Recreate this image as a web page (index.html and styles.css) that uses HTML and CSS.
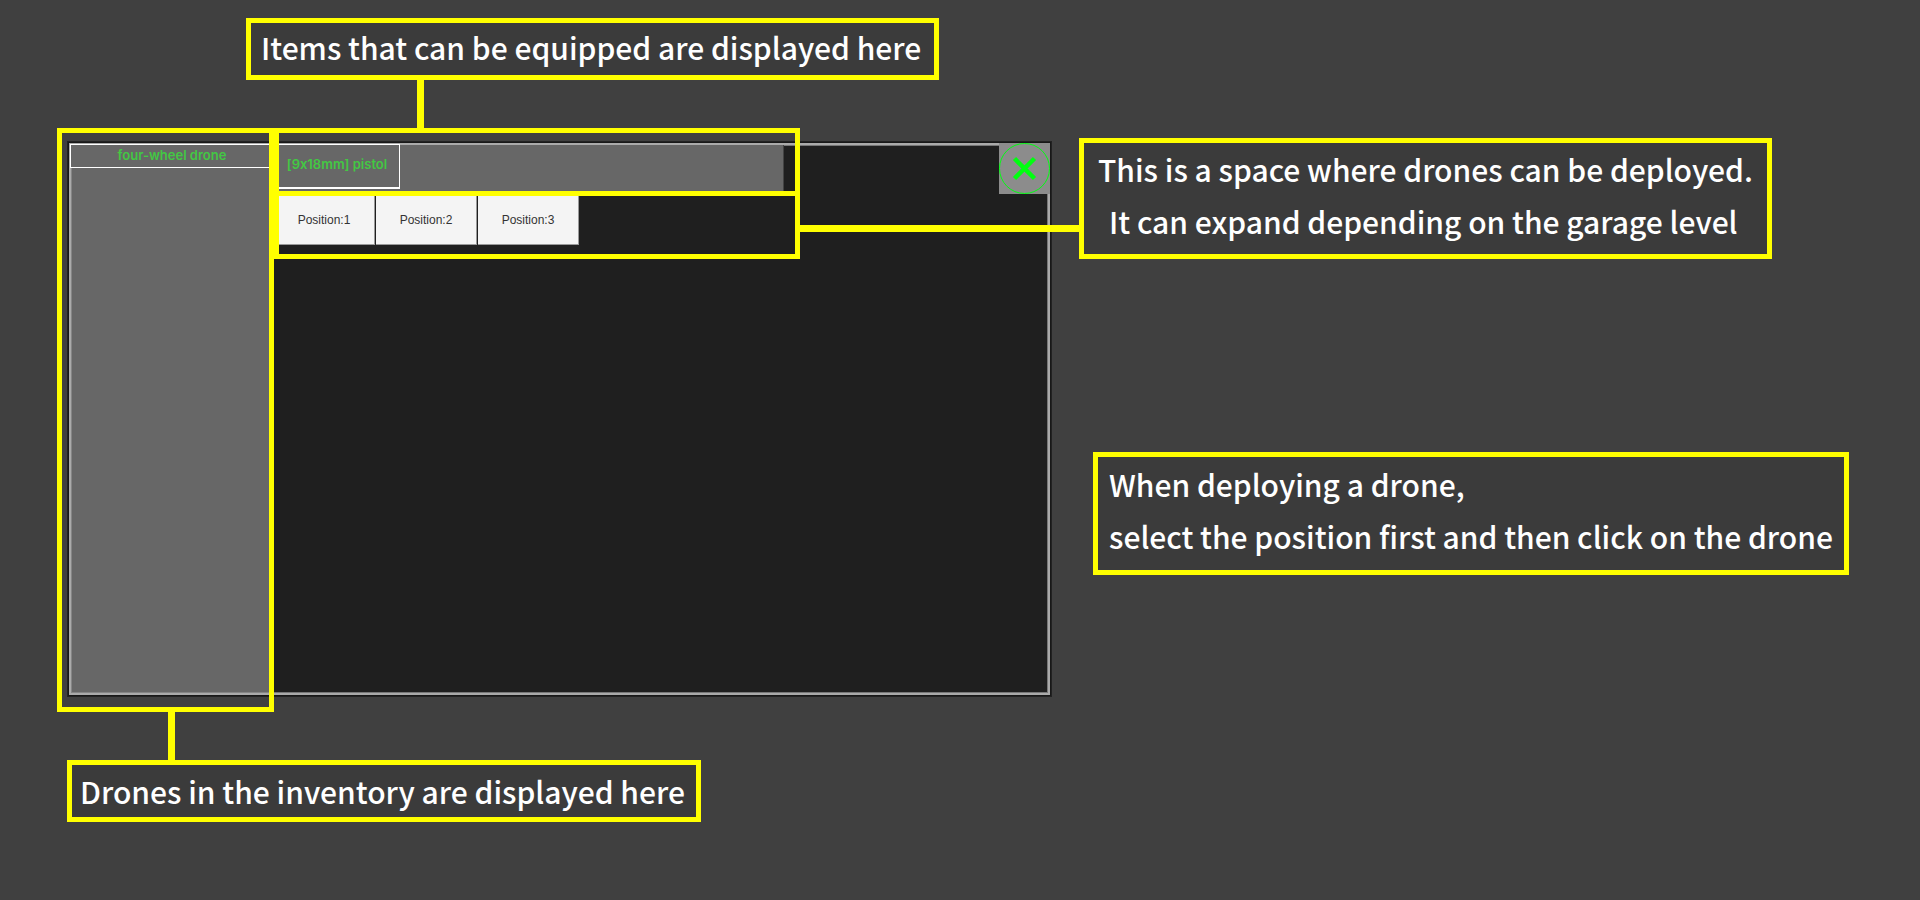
FILE: index.html
```html
<!DOCTYPE html>
<html lang="en">
<head>
<meta charset="utf-8">
<title>Drone garage guide</title>
<link rel="stylesheet" href="styles.css">
</head>
<body>
<main class="guide">
  <p class="note note-items">Items that can be equipped are displayed here</p>
  <div class="stage">
    <section class="window" aria-label="Garage">
      <aside class="inventory">
        <button class="item drone" type="button">four-wheel drone</button>
        <span class="highlight highlight-inventory"></span>
      </aside>
      <div class="loadout">
        <div class="equipment">
          <button class="item weapon" type="button">[9x18mm] pistol</button>
          <span class="highlight highlight-equipment"></span>
        </div>
        <div class="positions">
          <button class="position" type="button">Position:1</button>
          <button class="position" type="button">Position:2</button>
          <button class="position" type="button">Position:3</button>
          <span class="highlight highlight-positions"></span>
        </div>
      </div>
      <button class="close" type="button" aria-label="Close">
        <svg viewBox="0 0 51 51" fill="none" stroke="#00ff10">
          <circle cx="25.5" cy="25.5" r="25"/>
          <path d="M15.500 15.500 L35.500 35.500 M35.500 15.500 L15.500 35.500" stroke-width="4.500"/>
        </svg>
      </button>
    </section>
    <div class="side">
      <p class="note note-space">This is a space where drones can be deployed.<br><span class="second">It can expand depending on the garage level</span></p>
      <p class="note note-deploy">When deploying a drone,<br>select the position first and then click on the drone</p>
    </div>
  </div>
  <p class="note note-drones">Drones in the inventory are displayed here</p>
</main>
</body>
</html>
```
FILE: styles.css
```css
* {
  box-sizing: border-box;
}

body {
  margin: 0;
  background: #404040;
  color: #fff;
  font-family: "Noto Sans CJK KR", "Noto Sans", sans-serif;
}

.guide {
  padding: 18px 71px 0 67px;
}

.note {
  position: relative;
  margin: 0;
  padding: 0 10px;
  border: 5px solid #ff0;
  background: #3b3b3b;
  font-size: 30px;
  font-weight: 500;
  line-height: 52px;
  white-space: nowrap;
}

.note-items {
  width: 693px;
  height: 62px;
  margin-left: 179px;
  line-height: 48px;
}

.note-drones {
  width: 634px;
  margin-top: 63px;
  padding-left: 8px;
}

.note-items::after,
.note-drones::before,
.note-space::before {
  content: "";
  position: absolute;
  background: #ff0;
}

.note-items::after {
  top: 57px;
  left: 166px;
  width: 7px;
  height: 50px;
}

.note-drones::before {
  bottom: 57px;
  left: 96px;
  width: 7px;
  height: 50px;
}

.note-space::before {
  top: 82px;
  right: 100%;
  width: 286px;
  height: 7px;
}

.stage {
  display: grid;
  grid-template-columns: minmax(0, 985fr) minmax(0, 770fr);
  gap: 27px;
  margin-top: 62px;
}

.window {
  position: relative;
  display: flex;
  min-height: 552px;
  margin: 1px 2px 2px;
  border: 2px solid #aaa;
  background: #1f1f1f;
  outline: 1px solid #181818;
  box-shadow: inset 0 0 0 1px #777, 0 0 0 2px #222;
}

.inventory {
  position: relative;
  display: flow-root;
  width: 203px;
  background: #676767;
  box-shadow: inset 1px -1px 0 #858585;
}

.highlight {
  position: absolute;
  border: 5px solid #ff0;
  pointer-events: none;
}

.highlight-inventory {
  inset: -17px 0 -19px -14px;
}

.item {
  border: 1px solid #fff;
  background: #676767;
  color: #43c843;
  font-family: Inter, sans-serif;
  font-feature-settings: "calt" 0;
  font-size: 13px;
  font-weight: 600;
  line-height: 16px;
}

.drone {
  display: block;
  width: calc(100% + 1px);
  height: 24px;
  margin: -1px 0 0 -1px;
  padding: 0 0 2px;
}

.loadout {
  width: 526px;
}

.equipment {
  position: relative;
  display: flow-root;
  height: 46px;
  margin-right: 16px;
  background: #676767;
  border-right: 1px solid #444;
}

.weapon {
  display: block;
  width: 126px;
  height: 45px;
  margin-top: -1px;
  padding: 0 0 4px;
  border-bottom-width: 2px;
}

.highlight-equipment {
  inset: -17px -17px -5px 0;
}

.positions {
  position: relative;
  display: flex;
  gap: 1px;
  height: 68px;
  padding: 5px 0 14px;
}

.position {
  width: 101px;
  padding: 0;
  border: 0 solid #999;
  border-width: 0 1px 1px 0;
  background: #f4f4f4;
  color: #333;
  font: 12px "Liberation Sans", Arial, sans-serif;
}

.highlight-positions {
  inset: 0;
}

.close {
  position: absolute;
  top: -2px;
  right: -2px;
  width: 51px;
  height: 51px;
  padding: 0;
  border: 0;
  background: #8c8c8c;
}

.close svg {
  display: block;
}

.side {
  display: flex;
  flex-direction: column;
  gap: 193px;
  margin-top: -4px;
}

.note-space {
  width: 90%;
  padding: 0 14px 7px;
}

.second {
  padding-left: 11px;
}

.note-deploy {
  margin-left: 14px;
  padding: 1px 11px 8px;
}
```
